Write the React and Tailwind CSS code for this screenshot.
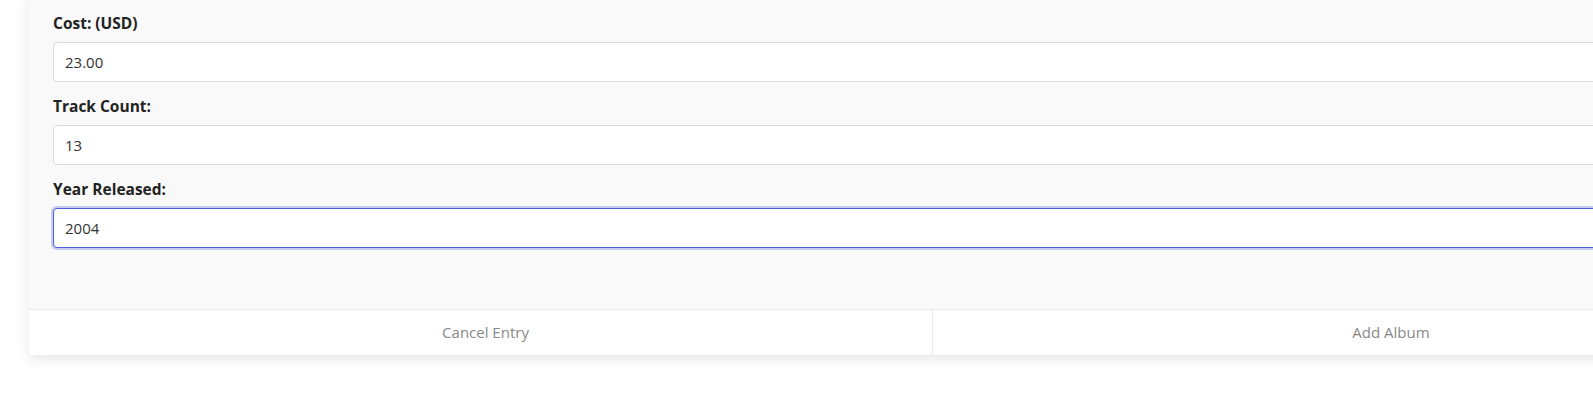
import React, { useState } from 'react';

const Field = ({ label, value, focused }) => (
  <div className="mb-[14px]">
    <label className="block text-[15.5px] leading-[20px] font-bold text-[#222] mb-[9px]">{label}</label>
    <input
      type="text"
      defaultValue={value}
      className={
        focused
          ? 'block w-full h-[40px] px-[11px] text-[15px] text-[#333] bg-white rounded-[4px] border border-[#4a5fd8] outline-none shadow-[0_0_0_2px_#c8cdf0]'
          : 'block w-full h-[40px] px-[11px] text-[15px] text-[#333] bg-white rounded-[4px] border border-[#dadada] outline-none'
      }
    />
  </div>
);

export default function App() {
  const [album] = useState({ cost: '23.00', tracks: '13', year: '2004' });

  return (
    <div className="w-[1593px] h-[413px] overflow-hidden bg-white" style={{ fontFamily: '"Open Sans", "Noto Sans", sans-serif' }}>
      <div className="pl-[29px] -mt-[10px]">
        <div className="w-[1808px] bg-[#f9f9f9] rounded-[4px] shadow-[0_4px_14px_rgba(0,0,0,0.10)] overflow-hidden">
          {/* Form body */}
          <div className="px-[24px] pt-[23px] pb-[47px]">
            <Field label="Cost: (USD)" value={album.cost} />
            <Field label="Track Count:" value={album.tracks} />
            <Field label="Year Released:" value={album.year} focused />
          </div>

          {/* Footer actions */}
          <div className="grid grid-cols-2 border-t border-[#e8e8e8] bg-white">
            <button className="h-[45px] pl-[10px] text-[15px] text-[#888] border-r border-[#e8e8e8]">Cancel Entry</button>
            <button className="h-[45px] pl-[12px] text-[15px] text-[#888]">Add Album</button>
          </div>
        </div>
      </div>
    </div>
  );
}
